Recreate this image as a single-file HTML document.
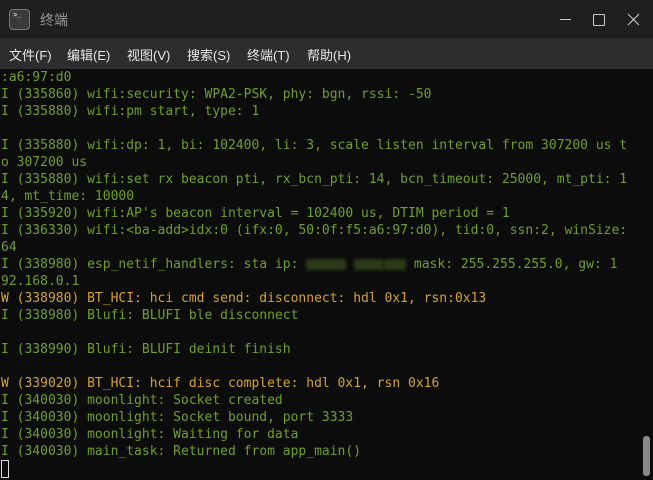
<!DOCTYPE html>
<html><head><meta charset="utf-8"><style>
*{margin:0;padding:0;box-sizing:border-box}
body{width:653px;height:480px;overflow:hidden;background:#0c0c0c;position:relative;font-family:"Liberation Sans","Noto Sans CJK SC",sans-serif}
#title{position:absolute;left:0;top:0;width:653px;height:38px;background:#1f1f1f}
#icon{position:absolute;left:9px;top:9px;width:21px;height:21px;border:1px solid #777;border-radius:4px;background:#3a3a3a;color:#ddd;font:bold 7px "Liberation Mono",monospace;padding:3px 0 0 3px;line-height:7px}
#ttl{position:absolute;left:40px;top:10px;color:#9a9a9a;font-size:14px}
#menu{position:absolute;left:0;top:38px;width:653px;height:31px;background:#2c2d2f;color:#e8e8e8;font-size:13px}
#menu span{position:absolute;top:7px}
#term{position:absolute;left:1px;top:69px;font:13px/17px "DejaVu Sans Mono","Liberation Mono",monospace;color:#6f9f2c;white-space:pre}
.w{color:#d4a233}
.blur{display:inline-block;background:#2c3a1a;filter:blur(1.5px);height:11px;vertical-align:middle}
#sb{position:absolute;left:643px;top:436px;width:7px;height:40px;background:#888;border-radius:3px}
#cur{position:absolute;left:1px;top:460px;width:8px;height:18px;border:1px solid #ddd}
</style></head><body>
<div id="title">
<div id="icon">&gt;_</div>
<div id="ttl">终端</div>
<svg style="position:absolute;left:555px;top:12px" width="90" height="16">
<line x1="5" y1="7.5" x2="16" y2="7.5" stroke="#ccc" stroke-width="1"/>
<rect x="38.5" y="2.5" width="11" height="11" fill="none" stroke="#ccc" stroke-width="1" rx="1"/>
<line x1="73" y1="2" x2="84" y2="13" stroke="#ccc"/><line x1="84" y1="2" x2="73" y2="13" stroke="#ccc"/>
</svg>
</div>
<div id="menu">
<span style="left:9px">文件(F)</span><span style="left:67px">编辑(E)</span><span style="left:127px">视图(V)</span><span style="left:187px">搜索(S)</span><span style="left:247px">终端(T)</span><span style="left:307px">帮助(H)</span>
</div>
<div id="term">:a6:97:d0
I (335860) wifi:security: WPA2-PSK, phy: bgn, rssi: -50
I (335880) wifi:pm start, type: 1

I (335880) wifi:dp: 1, bi: 102400, li: 3, scale listen interval from 307200 us t
o 307200 us
I (335880) wifi:set rx beacon pti, rx_bcn_pti: 14, bcn_timeout: 25000, mt_pti: 1
4, mt_time: 10000
I (335920) wifi:AP's beacon interval = 102400 us, DTIM period = 1
I (336330) wifi:&lt;ba-add&gt;idx:0 (ifx:0, 50:0f:f5:a6:97:d0), tid:0, ssn:2, winSize:
64
I (338980) esp_netif_handlers: sta ip: <span class="blur" style="width:40px"></span> <span class="blur" style="width:30px"></span><span class="blur" style="width:22px"></span> mask: 255.255.255.0, gw: 1
92.168.0.1
<span class="w">W (338980) BT_HCI: hci cmd send: disconnect: hdl 0x1, rsn:0x13</span>
I (338980) Blufi: BLUFI ble disconnect

I (338990) Blufi: BLUFI deinit finish

<span class="w">W (339020) BT_HCI: hcif disc complete: hdl 0x1, rsn 0x16</span>
I (340030) moonlight: Socket created
I (340030) moonlight: Socket bound, port 3333
I (340030) moonlight: Waiting for data
I (340030) main_task: Returned from app_main()</div>
<div id="cur"></div>
<div id="sb"></div>
</body></html>
